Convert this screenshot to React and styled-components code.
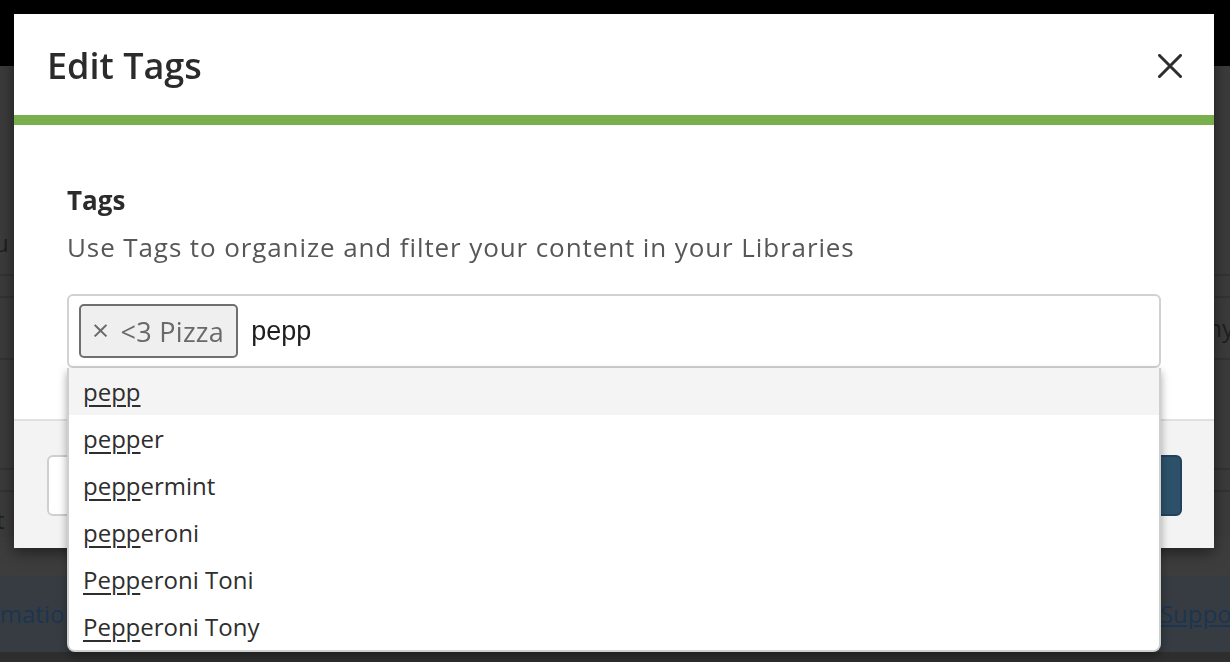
import React from "react";
import styled, { createGlobalStyle } from "styled-components";

const GlobalStyle = createGlobalStyle`
  html, body { margin: 0; padding: 0; }
  body {
    width: 1230px;
    height: 662px;
    overflow: hidden;
    font-family: "Open Sans", "Noto Sans", sans-serif;
    background: #3a3a3a;
  }
  * { box-sizing: border-box; }
`;

/* ---------- dimmed page behind the dialog ---------- */
const Page = styled.div`
  width: 1230px;
  height: 662px;
  display: flex;
  flex-direction: column;
  background: #3b3b3b;
  overflow: hidden;
`;

const TopBar = styled.div`
  height: 66px;
  background: #000;
  flex: none;
`;

const Band = styled.div`
  flex: none;
  height: ${(p) => p.$h}px;
  background: ${(p) => p.$bg || "#3b3b3b"};
  border-bottom: ${(p) => (p.$line ? "2px solid #333" : "none")};
  display: flex;
  align-items: ${(p) => p.$align || "center"};
  justify-content: space-between;
  padding-bottom: ${(p) => p.$pb || 0}px;
  font-size: 24px;
  line-height: 30px;
  color: #1e1e1e;
  white-space: nowrap;
`;

const EdgeText = styled.span`
  margin: ${(p) => p.$m || "0"};
  color: ${(p) => p.$c || "#1e1e1e"};
  text-decoration: ${(p) => (p.$u ? "underline" : "none")};
`;

/* ---------- dialog ---------- */
const Overlay = styled.div`
  position: fixed;
  inset: 0;
  padding: 14px;
`;

const Modal = styled.div`
  width: 1200px;
  background: #fff;
  box-shadow: 0 4px 14px rgba(0, 0, 0, 0.5);
  display: flex;
  flex-direction: column;
`;

const Header = styled.div`
  height: 111px;
  padding: 0 32px 0 33px;
  display: flex;
  align-items: center;
  justify-content: space-between;
  border-bottom: 10px solid #79b04d;
`;

const Title = styled.h2`
  margin: 0;
  padding-top: 2px;
  font-size: 36px;
  font-weight: 600;
  color: #2b2b2b;
  letter-spacing: 0;
`;

const CloseButton = styled.button`
  width: 24px;
  height: 24px;
  padding: 0;
  margin-top: 2px;
  border: none;
  background: transparent;
  display: flex;
  cursor: pointer;
`;

const Body = styled.div`
  padding: 57px 53px 51px;
  display: flex;
  flex-direction: column;
`;

const Label = styled.div`
  font-size: 26px;
  line-height: 36px;
  font-weight: 700;
  color: #2b2b2b;
`;

const Help = styled.div`
  margin-top: 11px;
  font-size: 26px;
  letter-spacing: 0.9px;
  line-height: 36px;
  color: #575757;
  white-space: nowrap;
`;

const Field = styled.div`
  position: relative;
  margin-top: 29px;
`;

const InputBox = styled.div`
  height: 74px;
  border: 2px solid #d2d2d2;
  border-radius: 6px;
  padding: 6px 10px;
  display: flex;
  align-items: center;
  gap: 13px;
`;

const Chip = styled.span`
  height: 54px;
  padding: 0 12px 0 11px;
  border: 2px solid #6f6f6f;
  border-radius: 5px;
  background: #efefef;
  display: flex;
  align-items: center;
  gap: 11px;
  font-size: 27px;
  letter-spacing: 0.3px;
  color: #696969;
`;

const ChipX = styled.span`
  font-size: 30px;
  line-height: 1;
  margin-top: -2px;
`;

const Typed = styled.span`
  font-family: "Liberation Sans", Arial, sans-serif;
  font-size: 27px;
  color: #1e1e1e;
`;

const Menu = styled.ul`
  position: absolute;
  top: 74px;
  left: 0;
  right: 0;
  margin: 0;
  padding: 0;
  list-style: none;
  background: #fff;
  border: 2px solid #cfcfcf;
  border-top: none;
  border-radius: 0 0 8px 8px;
  box-shadow: 0 4px 8px rgba(0, 0, 0, 0.35);
  overflow: hidden;
  z-index: 2;
`;

const Option = styled.li`
  height: 47px;
  padding-left: 14px;
  display: flex;
  align-items: center;
  font-size: 24px;
  color: #2e2e2e;
  background: ${(p) => (p.$active ? "#f4f4f4" : "#fff")};
`;

const Match = styled.span`
  text-decoration: underline;
  text-underline-offset: 4px;
  text-decoration-thickness: 2px;
`;

const Footer = styled.div`
  height: 129px;
  background: #f3f3f3;
  border-top: 2px solid #e0e0e0;
  padding: 34px 32px 32px 33px;
  display: flex;
  justify-content: space-between;
`;

const Button = styled.button`
  width: ${(p) => p.$w}px;
  height: 61px;
  border-radius: 6px;
  font-family: inherit;
  font-size: 24px;
  border: 2px solid ${(p) => (p.$primary ? "#22415a" : "#cfcfcf")};
  background: ${(p) => (p.$primary ? "#2d516a" : "#fff")};
  color: ${(p) => (p.$primary ? "#fff" : "#333")};
`;

const options = [
  ["pepp", ""],
  ["pepp", "er"],
  ["pepp", "ermint"],
  ["pepp", "eroni"],
  ["Pepp", "eroni Toni"],
  ["Pepp", "eroni Tony"],
];

export default function App() {
  return (
    <>
      <GlobalStyle />
      <Page>
        <TopBar />
        <Band $h={210} $line $align="flex-end" $pb={16}>
          <EdgeText $m="0 0 0 -6px">u</EdgeText>
        </Band>
        <Band $h={22} $line />
        <Band $h={62} $line>
          <span />
          <EdgeText $m="0 -4px 0 0">ny</EdgeText>
        </Band>
        <Band $h={110} $line />
        <Band $h={22} $line />
        <Band $h={45} $align="flex-end" $pb={2}>
          <EdgeText $m="0 0 0 -4px">t</EdgeText>
        </Band>
        <Band $h={39} $bg="#3d3d3d" />
        <Band $h={76} $bg="#363c41">
          <EdgeText $c="#1c3550" $m="0 0 0 -10px">rmation</EdgeText>
          <EdgeText $c="#1c3550" $u $m="0 -20px 0 0">Support</EdgeText>
        </Band>
        <Band $h={20} $bg="#2e2e2e" />
      </Page>

      <Overlay>
        <Modal role="dialog" aria-label="Edit Tags">
          <Header>
            <Title>Edit Tags</Title>
            <CloseButton aria-label="Close">
              <svg width="24" height="24" viewBox="0 0 24 24">
                <path
                  d="M1.5 1.5 L22.5 22.5 M22.5 1.5 L1.5 22.5"
                  stroke="#2e2e2e"
                  strokeWidth="3"
                  strokeLinecap="square"
                />
              </svg>
            </CloseButton>
          </Header>
          <Body>
            <Label>Tags</Label>
            <Help>Use Tags to organize and filter your content in your Libraries</Help>
            <Field>
              <InputBox>
                <Chip>
                  <ChipX>×</ChipX>
                  {"<3 Pizza"}
                </Chip>
                <Typed>pepp</Typed>
              </InputBox>
              <Menu>
                {options.map(([m, rest], i) => (
                  <Option key={i} $active={i === 0}>
                    <Match>{m}</Match>
                    {rest}
                  </Option>
                ))}
              </Menu>
            </Field>
          </Body>
          <Footer>
            <Button $w={160}>Cancel</Button>
            <Button $w={170} $primary>Save</Button>
          </Footer>
        </Modal>
      </Overlay>
    </>
  );
}
